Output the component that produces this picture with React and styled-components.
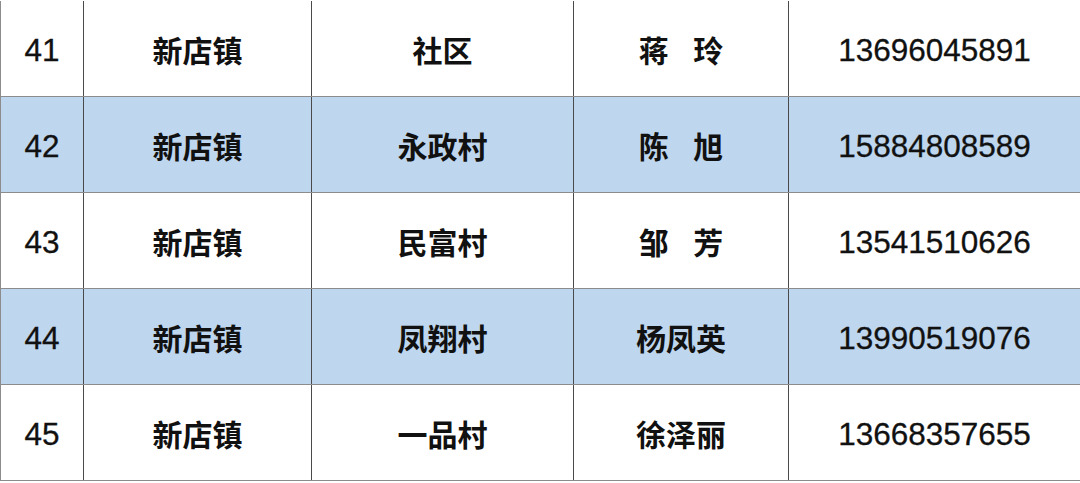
import React from 'react';
import styled, { createGlobalStyle } from 'styled-components';

const GlobalStyle = createGlobalStyle`
  html, body {
    margin: 0;
    padding: 0;
    background: #ffffff;
  }
  * {
    box-sizing: border-box;
  }
`;

const Table = styled.div`
  width: 1080px;
  height: 483px;
  padding-top: 1px;
  background: #ffffff;
  font-family: "Liberation Sans", "Noto Sans CJK SC", sans-serif;
  color: #111111;
`;

const Row = styled.div`
  display: grid;
  grid-template-columns: 83px 228px 262px 215px 292px;
  height: 96px;
  border-bottom: 1px solid #8c8c8c;
  background: ${(p) => (p.$shaded ? '#bed6ee' : '#ffffff')};
`;

// 숫자 칸과 한자 칸은 글꼴 굵기/크기만 다름
const Cell = styled.div`
  display: flex;
  align-items: center;
  justify-content: center;
  padding-top: ${(p) => (p.$cjk ? '0' : '3px')};
  border-left: 1px solid ${(p) => (p.$first ? '#8c8c8c' : '#4a4a4a')};
  font-size: ${(p) => (p.$cjk ? '30px' : '31.5px')};
  font-weight: ${(p) => (p.$cjk ? 700 : 400)};
  word-spacing: 16px;
  white-space: pre;
  -webkit-text-stroke: ${(p) => (p.$cjk ? '0' : '0.3px #111')};
`;

const rows = [
  { no: '41', town: '新店镇', village: '社区', name: '蒋 玲', phone: '13696045891' },
  { no: '42', town: '新店镇', village: '永政村', name: '陈 旭', phone: '15884808589' },
  { no: '43', town: '新店镇', village: '民富村', name: '邹 芳', phone: '13541510626' },
  { no: '44', town: '新店镇', village: '凤翔村', name: '杨凤英', phone: '13990519076' },
  { no: '45', town: '新店镇', village: '一品村', name: '徐泽丽', phone: '13668357655' },
];

const App = () => {
  return (
    <>
      <GlobalStyle />
      <Table>
        {rows.map((r, i) => (
          <Row key={r.no} $shaded={i % 2 === 1}>
            <Cell $first>{r.no}</Cell>
            <Cell $cjk>{r.town}</Cell>
            <Cell $cjk>{r.village}</Cell>
            <Cell $cjk>{r.name}</Cell>
            <Cell>{r.phone}</Cell>
          </Row>
        ))}
      </Table>
    </>
  );
};

export default App;
